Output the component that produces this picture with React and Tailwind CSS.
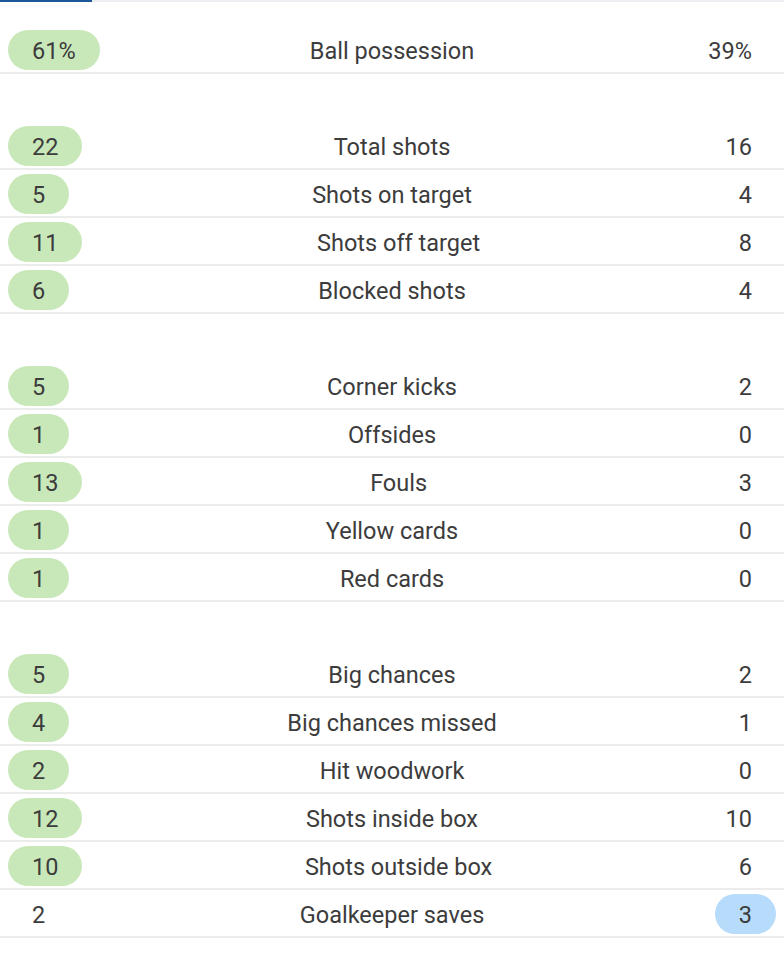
import React from "react";

const sections = [
  [["61%", "Ball possession", "39%", "L"]],
  [
    ["22", "Total shots", "16", "L"],
    ["5", "Shots on target", "4", "L"],
    ["11", "Shots off target", "8", "L"],
    ["6", "Blocked shots", "4", "L"],
  ],
  [
    ["5", "Corner kicks", "2", "L"],
    ["1", "Offsides", "0", "L"],
    ["13", "Fouls", "3", "L"],
    ["1", "Yellow cards", "0", "L"],
    ["1", "Red cards", "0", "L"],
  ],
  [
    ["5", "Big chances", "2", "L"],
    ["4", "Big chances missed", "1", "L"],
    ["2", "Hit woodwork", "0", "L"],
    ["12", "Shots inside box", "10", "L"],
    ["10", "Shots outside box", "6", "L"],
    ["2", "Goalkeeper saves", "3", "R"],
  ],
];

function Val({ v, hl, side }) {
  const bg = hl ? (side === "L" ? "bg-[#c9e8b9]" : "bg-[#b7dbfb]") : "";
  return (
    <div className={"flex px-2 " + (side === "L" ? "justify-start" : "justify-end")}>
      <span className={"h-10 min-w-[60px] px-6 pt-[3px] rounded-full flex items-center justify-center " + bg}>
        {v}
      </span>
    </div>
  );
}

export default function App() {
  return (
    <div
      className="w-[784px] h-[968px] bg-white text-[#3c3c3c] text-[23.5px] leading-none overflow-hidden"
      style={{ fontFamily: "Roboto, sans-serif" }}
    >
      <div className="h-[2px] bg-[#eeeef2] flex">
        <div className="w-[92px] bg-[#1d5599]" />
      </div>
      <div className="pt-6 flex flex-col gap-12">
        {sections.map((rows, i) => (
          <div key={i}>
            {rows.map(([l, label, r, w]) => (
              <div key={label} className="flex items-start h-12 pt-1 border-b-2 border-[#ececec]">
                <Val v={l} hl={w === "L"} side="L" />
                <div className="flex-1 h-10 pt-[3px] flex items-center justify-center">{label}</div>
                <Val v={r} hl={w === "R"} side="R" />
              </div>
            ))}
          </div>
        ))}
      </div>
    </div>
  );
}
